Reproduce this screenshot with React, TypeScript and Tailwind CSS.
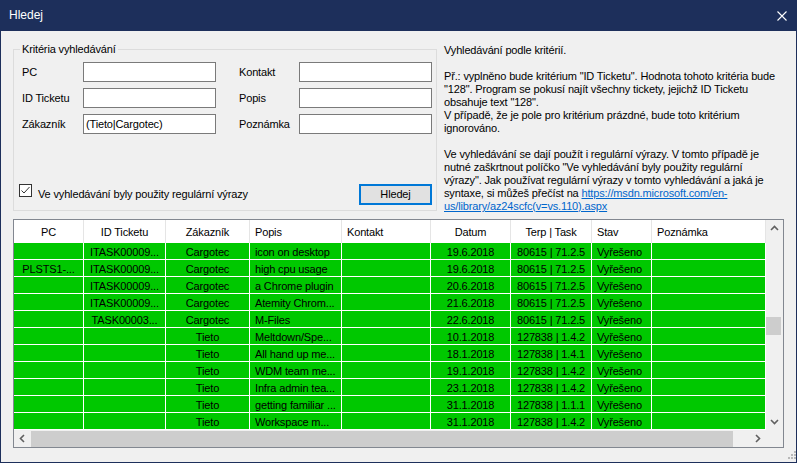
import React from 'react';

const FONT = "font-['Liberation_Sans',Arial,sans-serif]";

const cols = [
  { title: 'PC', w: 'w-[70px]', align: 'justify-center', head: 'justify-center' },
  { title: 'ID Ticketu', w: 'w-[82px]', align: 'justify-center', head: 'justify-center' },
  { title: 'Zákazník', w: 'w-[84px]', align: 'justify-center', head: 'justify-center' },
  { title: 'Popis', w: 'w-[92px]', align: 'justify-start pl-[5px]', head: 'justify-start pl-[5px]' },
  { title: 'Kontakt', w: 'w-[89px]', align: 'justify-start pl-[5px]', head: 'justify-start pl-[5px]' },
  { title: 'Datum', w: 'w-[80px]', align: 'justify-center', head: 'justify-center' },
  { title: 'Terp | Task', w: 'w-[81px]', align: 'justify-center', head: 'justify-center' },
  { title: 'Stav', w: 'w-[60px]', align: 'justify-start pl-[5px]', head: 'justify-start pl-[5px]' },
  { title: 'Poznámka', w: 'w-[114px]', align: 'justify-start pl-[5px]', head: 'justify-start pl-[5px]' },
];

const rows: string[][] = [
  ['', 'ITASK00009...', 'Cargotec', 'icon on desktop', '', '19.6.2018', '80615 | 71.2.5', 'Vyřešeno', ''],
  ['PLSTS1-...', 'ITASK00009...', 'Cargotec', 'high cpu usage', '', '19.6.2018', '80615 | 71.2.5', 'Vyřešeno', ''],
  ['', 'ITASK00009...', 'Cargotec', 'a Chrome plugin', '', '20.6.2018', '80615 | 71.2.5', 'Vyřešeno', ''],
  ['', 'ITASK00009...', 'Cargotec', 'Atemity Chrom...', '', '21.6.2018', '80615 | 71.2.5', 'Vyřešeno', ''],
  ['', 'TASK00003...', 'Cargotec', 'M-Files', '', '22.6.2018', '80615 | 71.2.5', 'Vyřešeno', ''],
  ['', '', 'Tieto', 'Meltdown/Spe...', '', '10.1.2018', '127838 | 1.4.2', 'Vyřešeno', ''],
  ['', '', 'Tieto', 'All hand up me...', '', '18.1.2018', '127838 | 1.4.1', 'Vyřešeno', ''],
  ['', '', 'Tieto', 'WDM team me...', '', '19.1.2018', '127838 | 1.4.2', 'Vyřešeno', ''],
  ['', '', 'Tieto', 'Infra admin tea...', '', '23.1.2018', '127838 | 1.4.2', 'Vyřešeno', ''],
  ['', '', 'Tieto', 'getting familiar ...', '', '31.1.2018', '127838 | 1.1.1', 'Vyřešeno', ''],
  ['', '', 'Tieto', 'Workspace m...', '', '31.1.2018', '127838 | 1.4.2', 'Vyřešeno', ''],
];

function Chevron({ dir }: { dir: 'up' | 'down' | 'left' | 'right' }) {
  const pts = {
    up: '1,6 4.5,2.5 8,6',
    down: '1,3 4.5,6.5 8,3',
    left: '6,1 2.5,4.5 6,8',
    right: '3,1 6.5,4.5 3,8',
  }[dir];
  return (
    <svg width="9" height="9" viewBox="0 0 9 9">
      <polyline points={pts} fill="none" stroke="#606060" strokeWidth="1.6" />
    </svg>
  );
}

function Field({ label, value = '', labelW }: { label: string; value?: string; labelW: string }) {
  return (
    <div className="flex items-center h-[20px]">
      <span className={`${labelW} shrink-0`}>{label}</span>
      <div className="w-[133px] h-[20px] border border-[#7a7a7a] bg-white flex items-center pl-[2px]">
        {value}
      </div>
    </div>
  );
}

const helpLines = [
  'Vyhledávání podle kritérií.',
  '',
  'Př.: vyplněno bude kritérium "ID Ticketu". Hodnota tohoto kritéria bude',
  '"128". Program se pokusí najít všechny tickety, jejichž ID Ticketu',
  'obsahuje text "128".',
  'V případě, že je pole pro kritérium prázdné, bude toto kritérium',
  'ignorováno.',
  '',
  'Ve vyhledávání se dají použít i regulární výrazy. V tomto případě je',
  'nutné zaškrtnout políčko "Ve vyhledávání byly použity regulární',
  'výrazy". Jak používat regulární výrazy v tomto vyhledávání a jaká je',
];

export default function App() {
  return (
    <div className={`w-[797px] h-[463px] bg-[#1d2f5b] flex flex-col text-[11px] leading-[13px] text-black ${FONT}`}>
      {/* title bar */}
      <div className="h-[31px] shrink-0 flex items-center justify-between pl-[9px] pr-[10px]">
        <span className="text-white text-[12px]">Hledej</span>
        <svg width="10" height="10" viewBox="0 0 10 10">
          <path d="M0.5 0.5 L9.5 9.5 M9.5 0.5 L0.5 9.5" stroke="#fff" strokeWidth="1.1" />
        </svg>
      </div>

      <div className="flex-1 mx-[1px] mb-[1px] bg-[#f0f0f0] px-[12px] relative tracking-[-0.15px]">
        <div className="flex h-[188px]">
          {/* group box */}
          <div className="relative mt-[18px] w-[424px] h-[162px] border border-[#dcdcdc] flex flex-col">
            <span className="absolute -top-[7px] left-[6px] px-[2px] bg-[#f0f0f0]">Kritéria vyhledávání</span>
            <div className="pt-[12px] pl-[8px] flex flex-col gap-[6px]">
              {[
                ['PC', '', 'Kontakt'],
                ['ID Ticketu', '', 'Popis'],
                ['Zákazník', '(Tieto|Cargotec)', 'Poznámka'],
              ].map(([l, v, r]) => (
                <div key={l} className="flex">
                  <Field label={l} value={v} labelW="w-[61px]" />
                  <div className="ml-[23px]">
                    <Field label={r} labelW="w-[60px]" />
                  </div>
                </div>
              ))}
            </div>
            <div className="flex-1" />
            <div className="flex items-start justify-between pl-[5px] pr-[4px] pb-[5px]">
              <div className="flex items-start">
                <div className="w-[13px] h-[13px] border border-[#333] bg-white flex items-center justify-center">
                  <svg width="11" height="11" viewBox="0 0 11 11">
                    <polyline points="1.5,5.5 4,8 9.5,2" fill="none" stroke="#333" strokeWidth="1" />
                  </svg>
                </div>
                <span className="ml-[6px] mt-[4px]">Ve vyhledávání byly použity regulární výrazy</span>
              </div>
              <div className="w-[73px] h-[21px] border-2 border-[#0078d7] bg-[#e1e1e1] flex items-center justify-center">
                Hledej
              </div>
            </div>
          </div>

          {/* help text */}
          <div className="ml-[7px] mt-[13px] whitespace-pre">
            {helpLines.map((t, i) => (
              <div key={i} className="h-[13px]">{t}</div>
            ))}
            <div className="h-[13px]">
              syntaxe, si můžeš přečíst na{' '}
              <span className="text-[#0066cc] underline">https://msdn.microsoft.com/en-</span>
            </div>
            <div className="h-[13px]">
              <span className="text-[#0066cc] underline">us/library/az24scfc(v=vs.110).aspx</span>
            </div>
          </div>
        </div>

        {/* table */}
        <div className="w-[771px] h-[229px] border border-[#828790] bg-white flex flex-col">
          <div className="flex h-[210px]">
            <div className="w-[752px] flex flex-col">
              <div className="flex h-[23px] bg-white">
                {cols.map((c) => (
                  <div key={c.title} className={`${c.w} h-full border-r border-[#e5e5e5] flex items-center pt-[1px] ${c.head}`}>
                    {c.title}
                  </div>
                ))}
              </div>
              {rows.map((r, i) => (
                <div key={i} className="flex h-[17px]">
                  {r.map((cell, j) => (
                    <div
                      key={j}
                      className={`${cols[j].w} h-[17px] bg-[#00c800] border-r border-b border-white flex items-start pt-[2px] leading-[14px] whitespace-nowrap ${cols[j].align}`}
                    >
                      {cell}
                    </div>
                  ))}
                </div>
              ))}
            </div>
            {/* vertical scrollbar */}
            <div className="w-[17px] h-[210px] bg-[#f0f0f0] flex flex-col">
              <div className="h-[17px] flex items-center justify-center">
                <Chevron dir="up" />
              </div>
              <div className="flex-1">
                <div className="mt-[80px] h-[18px] w-[15px] bg-[#cdcdcd]" />
              </div>
              <div className="h-[17px] flex items-center justify-center">
                <Chevron dir="down" />
              </div>
            </div>
          </div>
          {/* horizontal scrollbar */}
          <div className="flex h-[17px] bg-[#f0f0f0]">
            <div className="w-[17px] flex items-center justify-center">
              <Chevron dir="left" />
            </div>
            <div className="w-[702px] mt-[1px] bg-[#cdcdcd]" />
            <div className="w-[16px]" />
            <div className="w-[17px] flex items-center justify-center">
              <Chevron dir="right" />
            </div>
            <div className="w-[17px] bg-[#f0f0f0]" />
          </div>
        </div>

        {/* resize grip */}
        <svg className="absolute right-0 bottom-[1px]" width="10" height="10" viewBox="0 0 10 10">
          <rect x="8" y="0" width="2" height="2" fill="#b8b8b8" />
          <rect x="5" y="3" width="2" height="2" fill="#b8b8b8" />
          <rect x="8" y="3" width="2" height="2" fill="#b8b8b8" />
          <rect x="2" y="6" width="2" height="2" fill="#b8b8b8" />
          <rect x="5" y="6" width="2" height="2" fill="#b8b8b8" />
          <rect x="8" y="6" width="2" height="2" fill="#b8b8b8" />
        </svg>
      </div>
    </div>
  );
}
